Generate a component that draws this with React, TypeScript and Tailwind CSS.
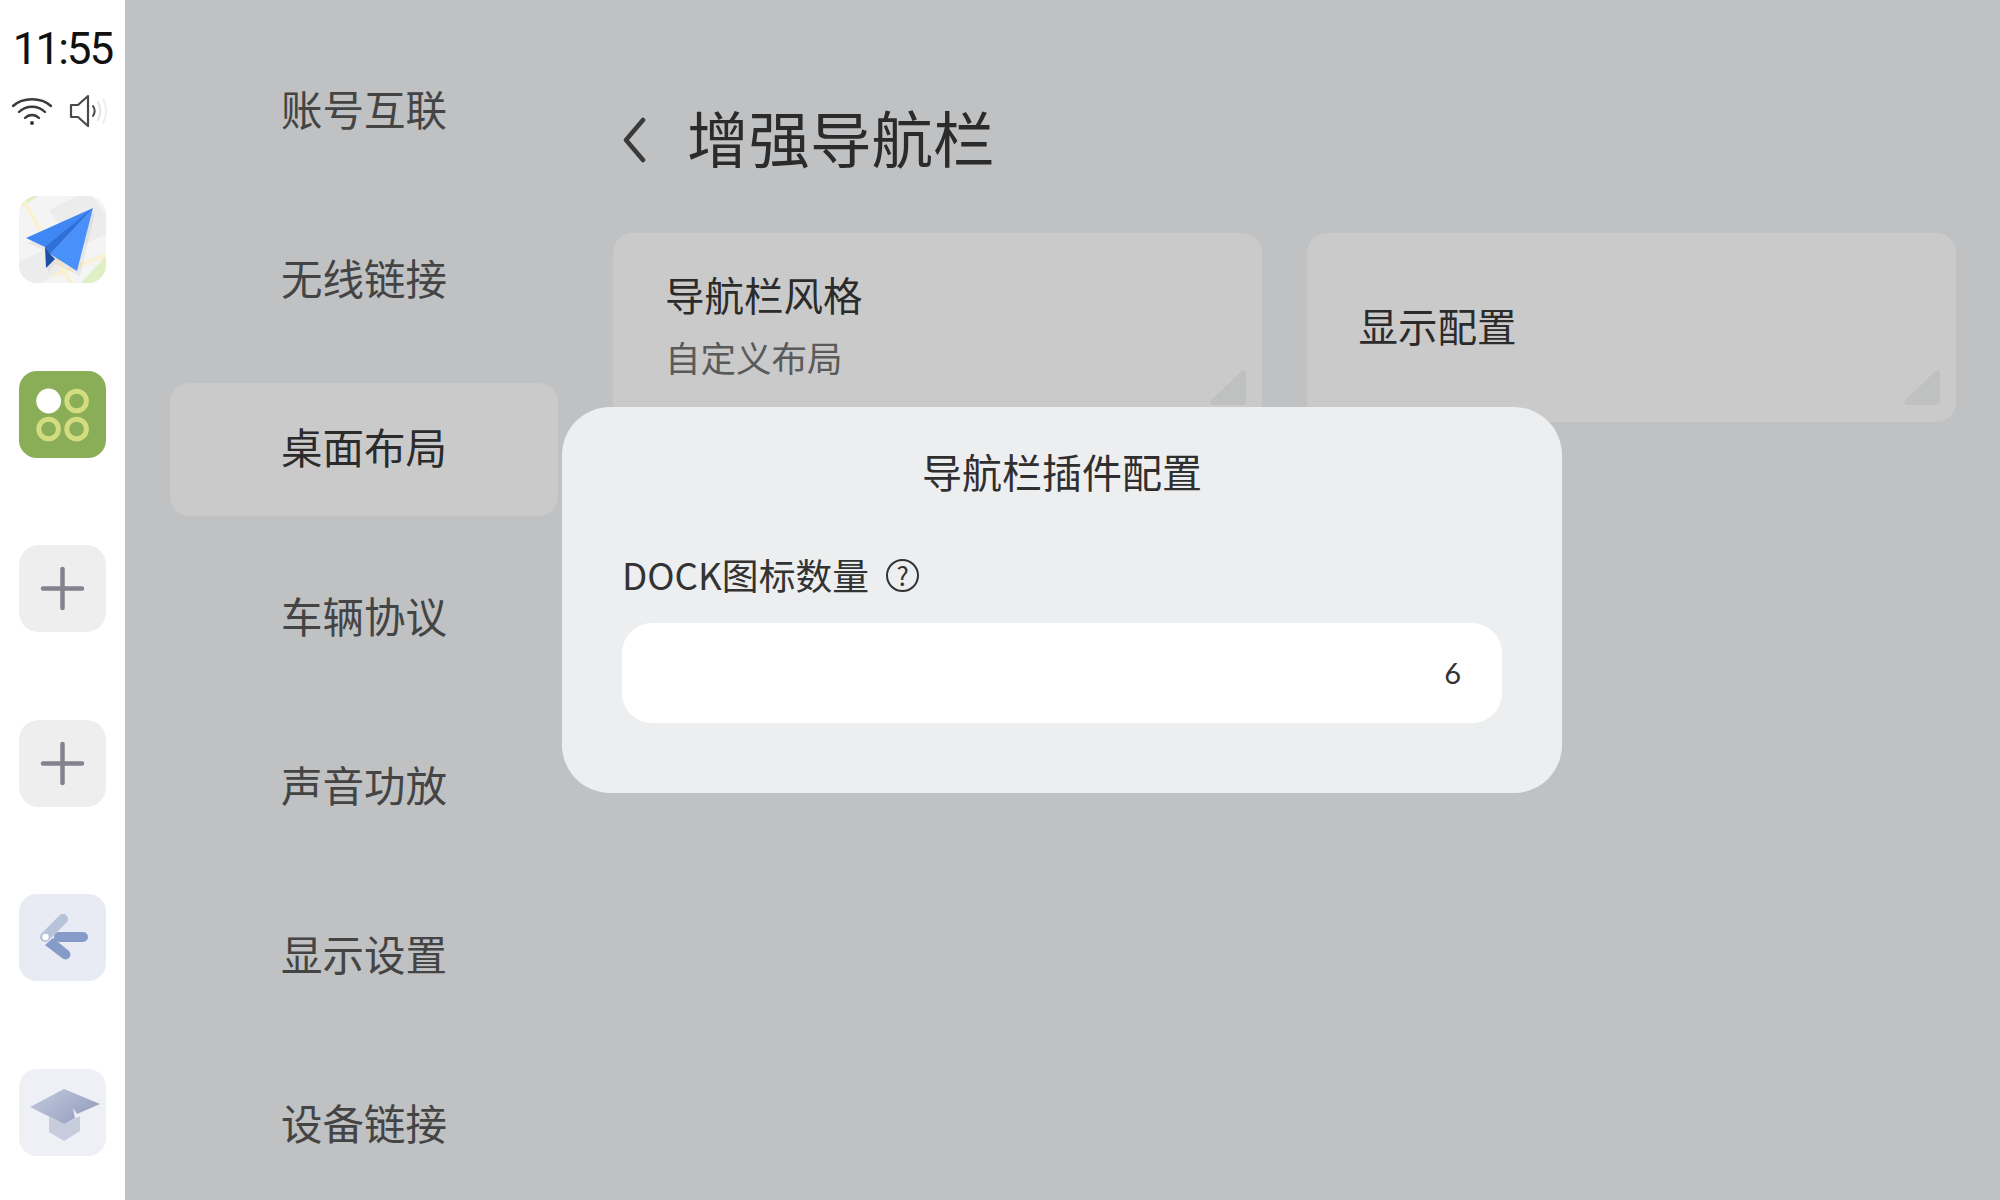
const navItems = ['账号互联', '无线链接', '桌面布局', '车辆协议', '声音功放', '显示设置', '设备链接']

function MapIcon() {
  return (
    <svg width="87" height="87" viewBox="0 0 87 87" className="rounded-[18px] bg-[#f4f4f4]">
      <path d="M0 0h20L0 12z" fill="#dff0c4" />
      <path d="M87 60v27H62z" fill="#dff0c4" />
      <path d="M0 66L28 52l14 22-20 13H0z" fill="#ececec" />
      <path d="M30 14L58 0h15L87 18v20L58 52z" fill="#ececec" />
      <path d="M4 4l48 83" stroke="#fbf0d2" strokeWidth="4" fill="none" />
      <path d="M34 80l53-21" stroke="#fbf0d2" strokeWidth="4" fill="none" />
      <path d="M74 12L7 42l19 9 1 21 7-9 25 12z" fill="#000" opacity="0.05" transform="translate(2 5)" />
      <path d="M74 12L7 42l19 9 5 7z" fill="#3f87f5" />
      <path d="M74 12L31 58l27 17z" fill="#4a90fa" />
      <path d="M74 12L26 51l5 7z" fill="#2f6fd8" />
      <path d="M26 51l5 7 5 5-9 9z" fill="#1a4fa3" />
    </svg>
  )
}

function DotsIcon() {
  return (
    <svg width="87" height="87" viewBox="0 0 87 87" className="rounded-[18px] bg-[#8aae57]">
      <circle cx="29.6" cy="30" r="12.4" fill="#fff" />
      <circle cx="57.6" cy="30" r="9.8" fill="none" stroke="#d3dc7e" strokeWidth="5" />
      <circle cx="29.6" cy="58" r="9.8" fill="none" stroke="#d3dc7e" strokeWidth="5" />
      <circle cx="57.6" cy="58" r="9.8" fill="none" stroke="#d3dc7e" strokeWidth="5" />
    </svg>
  )
}

function PlusIcon() {
  return (
    <svg width="87" height="87" viewBox="0 0 87 87" className="rounded-[20px] bg-[#eeeeee]">
      <path d="M43.500 24v39M24 43.500h39" stroke="#83838f" strokeWidth="4.500" strokeLinecap="round" />
    </svg>
  )
}

function ArrowIcon() {
  return (
    <svg width="87" height="87" viewBox="0 0 87 87" className="rounded-[18px] bg-[#e8eaf4]">
      <path d="M44 25L26 43" stroke="#b7c3d9" strokeWidth="10" strokeLinecap="round" />
      <circle cx="26.500" cy="43" r="3.200" fill="#fff" />
      <path d="M40 43h24" stroke="#859bc8" strokeWidth="10" strokeLinecap="round" />
      <path d="M26 51l8-7 16 13a4.600 4.600 0 0 1-7 7z" fill="#859bc8" />
    </svg>
  )
}

function CapIcon() {
  return (
    <svg width="87" height="87" viewBox="0 0 87 87" className="rounded-[18px] bg-[#eef0f6]">
      <defs>
        <linearGradient id="cap" x1="0" y1="0" x2="1" y2="0.6">
          <stop offset="0" stopColor="#c2cbdd" />
          <stop offset="1" stopColor="#97a1c0" />
        </linearGradient>
      </defs>
      <path d="M30 48l15 7 16-8v15l-16 10-15-9z" fill="#c6ccdc" />
      <path d="M11 38L45 20l36 15-23 10-4-6 2 10-11 6z" fill="url(#cap)" />
    </svg>
  )
}

function Corner() {
  return (
    <svg width="36" height="35" viewBox="0 0 36 35" className="absolute right-[16px] bottom-[17px]">
      <path d="M31 1.500C33 -0.500 36 0.500 36 4v27a4 4 0 0 1-4 4H3c-2.500 0-3.500-2.500-2-4.500z" fill="#bfc1c0" />
    </svg>
  )
}

export default function App() {
  return (
    <div className="relative flex h-[1200px] w-[2000px] overflow-hidden bg-[#c0c1c3] font-['Noto_Sans_CJK_SC',sans-serif]">
      {/* 左侧状态栏 */}
      <div className="flex w-[125px] shrink-0 flex-col items-center bg-white">
        <div className="mt-[18px] font-['Roboto',sans-serif] text-[44px] leading-[62px] font-normal tracking-[-2px] text-[#111]">11:55</div>
        <div className="mt-[14px] flex w-[96px] -translate-x-[4px] items-center justify-between">
          <svg width="42" height="30" viewBox="0 0 42 30" fill="none" stroke="#3a3a3a" strokeWidth="2.400" strokeLinecap="round">
            <path d="M2 10C12 1 30 1 40 10" />
            <path d="M8 16C15 9 27 9 34 16" />
            <path d="M14 22c4-4 10-4 14 0" />
            <circle cx="21" cy="27" r="2" fill="#3a3a3a" stroke="none" />
          </svg>
          <svg width="38" height="34" viewBox="0 0 38 34" fill="none" strokeLinecap="round" strokeLinejoin="round">
            <path d="M2 11v12h7l10 9V2L9 11z" stroke="#4a4a4a" strokeWidth="2.200" />
            <path d="M24 12c2 3 2 7 0 10" stroke="#4a4a4a" strokeWidth="2" />
            <path d="M29 8c3 5 3 13 0 18" stroke="#e2e2e2" strokeWidth="2" />
            <path d="M34 5c4 7 4 17 0 24" stroke="#eeeeee" strokeWidth="2" />
          </svg>
        </div>
        <div className="mt-[68px] flex flex-col gap-[87.6px]">
          <MapIcon />
          <DotsIcon />
          <PlusIcon />
          <PlusIcon />
          <ArrowIcon />
          <CapIcon />
        </div>
      </div>

      {/* 设置菜单 */}
      <div className="ml-[45px] flex w-[388px] shrink-0 flex-col gap-[36px] pt-[45px]">
        {navItems.map(item => (
          <div key={item}
            className={`flex h-[133px] shrink-0 items-center justify-center rounded-[20px] pb-[6px] text-[41.5px] ${item === '桌面布局' ? 'bg-[#cacaca] text-[#2b2b2b]' : 'text-[#444]'}`}>
            {item}
          </div>
        ))}
      </div>

      {/* 内容区 */}
      <div className="ml-[55px] flex w-[1343px] shrink-0 flex-col pt-[97px]">
        <div className="flex h-[80px] items-center">
          <svg width="26" height="46" viewBox="0 0 26 46" fill="none" stroke="#3a3a3a" strokeWidth="4.500" strokeLinecap="round" strokeLinejoin="round" className="mt-[6px] ml-[9px]">
            <path d="M21 3L4 23l17 20" />
          </svg>
          <div className="ml-[39px] text-[61.5px] leading-none text-[#2b2b2b]">增强导航栏</div>
        </div>
        <div className="mt-[56px] flex gap-[45px]">
          <div className="relative flex h-[189px] w-[649px] flex-col rounded-[20px] bg-[#cacaca] pl-[52px]">
            <div className="mt-[33px] text-[39.5px] leading-[56px] text-[#2b2b2b]">导航栏风格</div>
            <div className="mt-[10px] text-[35.5px] leading-[50px] text-[#5a5a5a]">自定义布局</div>
            <Corner />
          </div>
          <div className="relative flex h-[189px] w-[650px] items-center rounded-[20px] bg-[#cacaca] pb-[6px] pl-[52px]">
            <div className="text-[39.5px] text-[#2b2b2b]">显示配置</div>
            <Corner />
          </div>
        </div>
      </div>

      {/* 弹窗 */}
      <div className="absolute top-[407px] left-[562px] flex h-[386px] w-[1000px] flex-col rounded-[48px] bg-[#edeef0] px-[60px]">
        <div className="mt-[35px] text-center text-[40px] leading-[58px] text-[#2f2f2f]">导航栏插件配置</div>
        <div className="mt-[50px] flex h-[50px] items-center text-[36.800px] text-[#333]">
          DOCK图标数量
          <span className="ml-[17px] flex h-[33px] w-[33px] items-center justify-center rounded-full border-2 border-[#333] text-[26px] leading-none">?</span>
        </div>
        <div className="mt-[23px] flex h-[100px] items-center justify-end rounded-[30px] bg-white pr-[41px] font-['Lato',sans-serif] text-[29px] text-[#333]">6</div>
      </div>
    </div>
  )
}
